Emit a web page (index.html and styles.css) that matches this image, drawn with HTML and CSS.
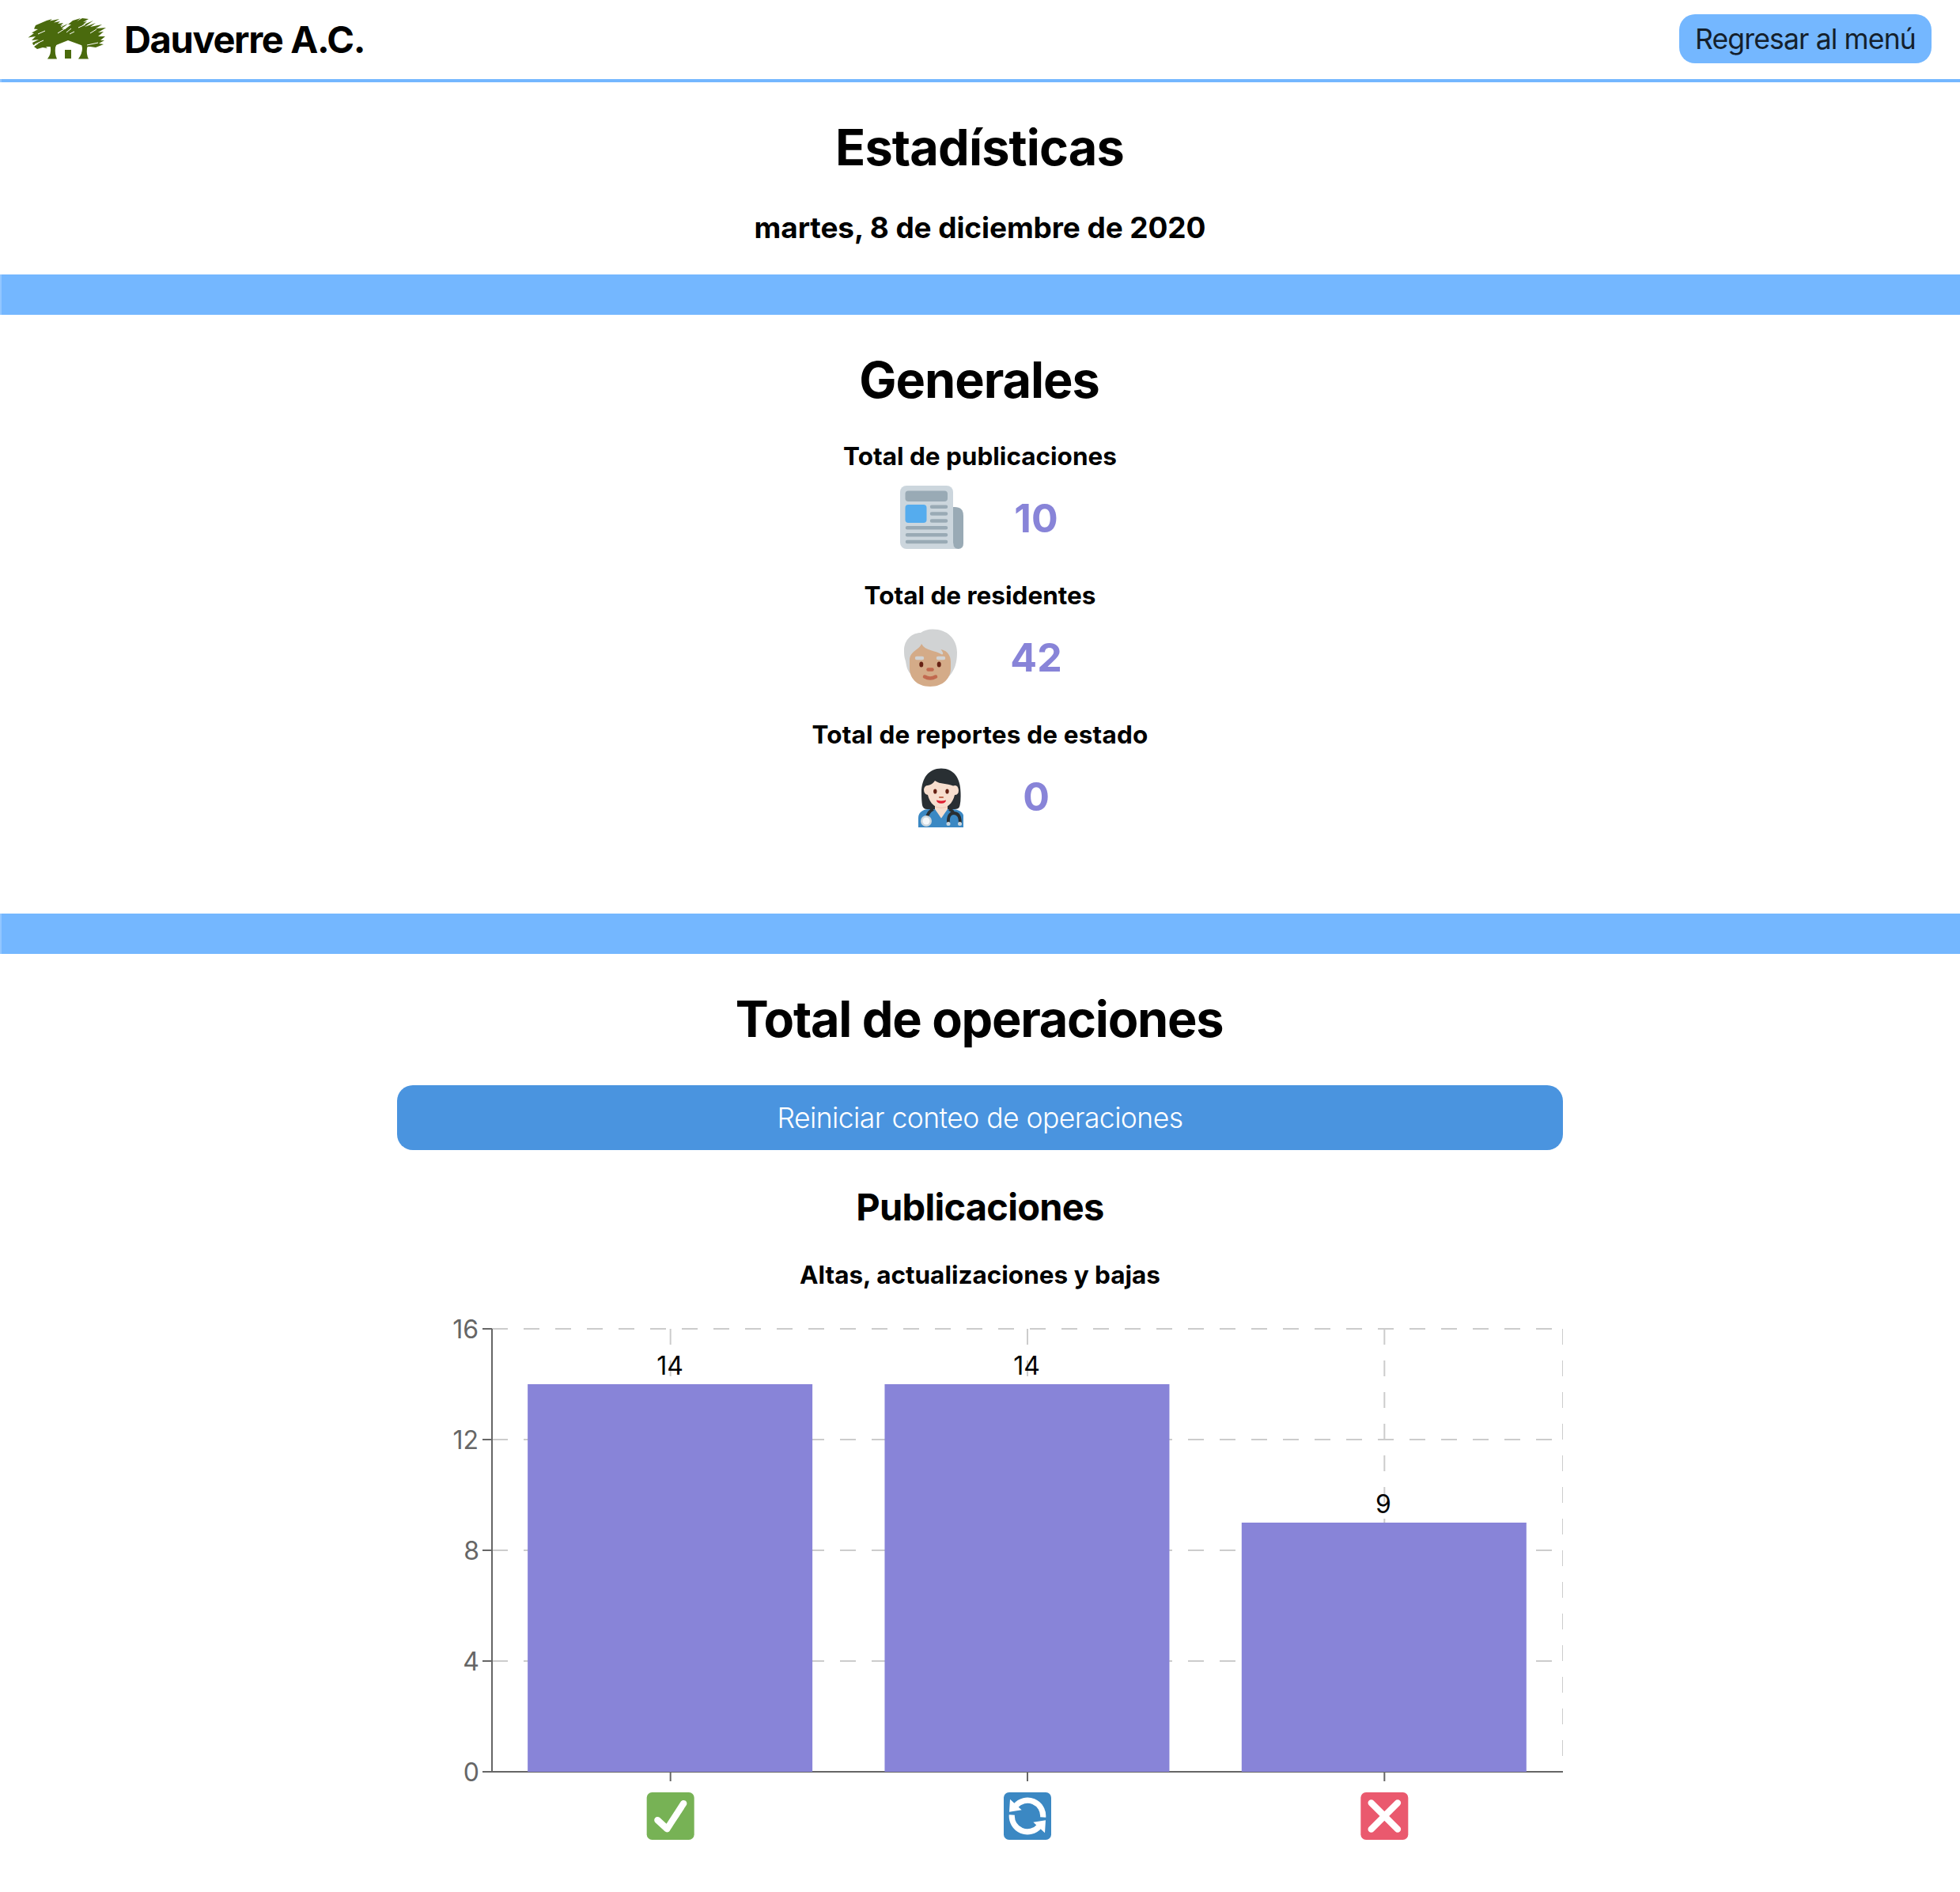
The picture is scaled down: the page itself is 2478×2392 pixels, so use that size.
FILE: index.html
```html
<!DOCTYPE html>
<html lang="es">
<head>
<meta charset="utf-8">
<title>Estadísticas - Dauverre A.C.</title>
<link rel="stylesheet" href="styles.css">
</head>
<body>
<header class="topbar">
  <svg class="logo" viewBox="32 20 106 58" width="106" height="58">
    <g fill="#4a6a0d">
      <path d="M35.500 47.500L43 42L40 41.500L48 37L43 36.500L45 32L52 29L59 26L66 24L63 26.500L75 24L68 28.500L76 27L73 30L80 29L76 33L86 30L78 36L82 37L90 31L86 31L92 26L102 23L97 27L104 23L112 24L105 28L110 27L104 32L118 26L107 34L121 29L114 34L129 31L121 36L134 35L124 41L131 40L124 46L133 46L127 51L132 51L125 55L131 56L121 60L114 59L108 59L86 51L66 59L58 59L60 61L54 60L47 62L43 59L50 54L42 57L41 54L49 50L40 51L45 46Z"/>
      <path d="M63 55L72 55L70 60Q69 68 72 74.500H60Q65 68 64 61ZM103 55L112 55L110 61Q109 69 112 74.500H99Q104 68 104 61Z"/>
      <path d="M82 63H90V74H82Z"/>
    </g>
    <path d="M77 34L88 28M73 42L84 35M84 41L90 36M88 43L94 40M99 35L108 31M114 42L122 37M48 43L57 39M44 56L55 51M110 57L124 54" stroke="#fff" stroke-width="1"/>
  </svg>
  <span class="brand">Dauverre A.C.</span>
  <button class="btn-back"><span>Regresar al menú</span></button>
</header>

<section class="intro">
  <h1 class="t-est">Estadísticas</h1>
  <h3 class="t-date">martes, 8 de diciembre de 2020</h3>
</section>
<div class="divider"></div>

<section class="general">
  <h1 class="t-gen">Generales</h1>
  <div class="stat">
    <h4 class="t-pub">Total de publicaciones</h4>
    <div class="stat-row">
      <svg viewBox="0 0 80 80" width="80" height="80">
        <rect width="67" height="80" rx="8" fill="#ccd6dd"/><path d="M50 70H67V72Q67 80 74 80H50Z" fill="#ccd6dd"/>
        <path d="M67 27V72Q67 80 73.500 80Q80 80 80 73V38Q80 27 69 27Z" fill="#99aab5"/>
        <rect x="6.500" y="6.500" width="53.500" height="13.500" rx="4" fill="#99aab5"/>
        <rect x="6.500" y="24" width="27" height="23" rx="4" fill="#55acee"/>
        <path d="M40 26.700H58M40 35.500H58M40 44.500H58M9 53.300H58M9 62.200H58M9 71.100H58" stroke="#99aab5" stroke-width="4.500" stroke-linecap="round"/>
      </svg>
      <strong>10</strong>
    </div>
  </div>
  <div class="stat">
    <h4 class="t-res">Total de residentes</h4>
    <div class="stat-row">
      <svg viewBox="18 10 80 80" width="80" height="80">
        <path d="M44 20Q50 15.500 59 15.500C78 15.500 90 28 90 45C90 58 87 67 80 75L32 73C27 68 26 62 25 56C23 51 23 46 23 42C23 29 33 20 44 20Z" fill="#d1d3d4"/>
        <path d="M30 55C30 43 42 42 45 34C50 43 62 42 71 47.500Q74 47 69.500 41C79 43 82 50 82 57V65C82 77 73 88 56 88C39 88 30 77 30 65Z" fill="#d4ab88"/>
        <path d="M39 52H46M66 52H73" stroke="#d1d3d4" stroke-width="4.500" stroke-linecap="round"/>
        <ellipse cx="44.800" cy="60" rx="2.500" ry="3.500" fill="#662113"/><ellipse cx="67.200" cy="60" rx="2.500" ry="3.500" fill="#662113"/>
        <path d="M53.500 66.500H58.500" stroke="#c1694f" stroke-width="4.500" stroke-linecap="round"/>
        <path d="M49 75.500Q56 79.500 63 75.500" fill="none" stroke="#c1694f" stroke-width="4.500" stroke-linecap="round"/>
      </svg>
      <strong>42</strong>
    </div>
  </div>
  <div class="stat">
    <h4 class="t-rep">Total de reportes de estado</h4>
    <div class="stat-row">
      <svg viewBox="18 16 80 80" width="80" height="80">
        <path d="M45 52C45 34 54 21.500 70 21.500C86 21.500 94.500 34 94.500 52Q95 64 93 70Q92 73 87 73H52Q47 73 46 68Q45 62 45 52Z" fill="#292f33"/>
        <path d="M41 96V84C41 77 47 73 54 73H84C93 73 99 78 99 85V96Z" fill="#3b88c3"/>
        <path d="M62 64H78V73L70 84.500L62 73Z" fill="#f7dece"/>
        <path d="M53 43Q59 42 62 37C69 42 77 40 85 43.500Q91 41 92 49Q92 55 87 55C85 64 79 71.500 70 71.500C61 71.500 55 64 53 55Q48 54 48 48Q49 43 53 43Z" fill="#f7dece"/>
        <path d="M62 70Q70 73 78 70" fill="none" stroke="#eec2ad" stroke-width=".8"/>
        <ellipse cx="62.300" cy="50.500" rx="2.200" ry="3.100" fill="#662113"/><ellipse cx="77.500" cy="50.500" rx="2.200" ry="3.100" fill="#662113"/>
        <path d="M68 58H72" stroke="#c1694f" stroke-width="2.200" stroke-linecap="round"/>
        <path d="M64 61.500Q70 63.500 76 61.500Q76 65.500 70 65.800Q64 65.500 64 61.500Z" fill="#df1f32"/>
        <path d="M60 73Q53 76 52 84M80 73Q85 75 86 79M79 91Q78 78 86 78Q94 78 94 91" fill="none" stroke="#292f33" stroke-width="3.800"/>
        <circle cx="51" cy="88" r="7" fill="#ccd6dd"/><circle cx="51" cy="88" r="4.500" fill="#f5f8fa"/>
        <circle cx="79" cy="91.500" r="2.500" fill="#ccd6dd"/><circle cx="93.500" cy="91.500" r="2.500" fill="#ccd6dd"/>
      </svg>
      <strong>0</strong>
    </div>
  </div>
</section>
<div class="divider"></div>

<section class="operations">
  <h1 class="t-ops">Total de operaciones</h1>
  <button class="btn-reset"><span>Reiniciar conteo de operaciones</span></button>
  <h2 class="t-publ">Publicaciones</h2>
  <h4 class="t-alt">Altas, actualizaciones y bajas</h4>
  <svg class="chart" viewBox="502 1660 1474 700" width="1474" height="700">
    <g stroke="#ccc" stroke-width="2" stroke-dasharray="20 20">
      <path d="M622 1680H1976"/><path d="M622 1820H1976"/><path d="M622 1960H1976"/><path d="M622 2100H1976"/>
      <path d="M847.670 1680V2240"/><path d="M1299 1680V2240"/><path d="M1750.330 1680V2240"/><path d="M1976 1680V2240"/>
    </g>
    <path d="M622 1680V2240M622 2240H1976M610 1680H622M610 1820H622M610 1960H622M610 2100H622M610 2240H622M847.670 2240V2252M1299 2240V2252M1750.330 2240V2252" stroke="#666" stroke-width="2"/>
    <g fill="#8884d8">
      <rect x="667.130" y="1750" width="360" height="490"/>
      <rect x="1118.470" y="1750" width="360" height="490"/>
      <rect x="1569.800" y="1925" width="360" height="315"/>
    </g>
    <g class="ylabels">
      <text x="605" y="1692">16</text><text x="605" y="1832">12</text><text x="606" y="1972">8</text><text x="606" y="2112">4</text><text x="606" y="2252">0</text>
    </g>
    <g class="values">
      <text x="847" y="1738">14</text><text x="1298" y="1738">14</text><text x="1749" y="1913">9</text>
    </g>
    <g transform="translate(817.670 2266) scale(1.66667)">
      <rect width="36" height="36" rx="4" fill="#77b255"/>
      <path fill="#fff" d="M29.280 6.362c-1.156-.751-2.704-.422-3.458.736L14.936 23.877l-5.029-4.650c-1.014-.938-2.596-.875-3.533.138-.937 1.014-.875 2.596.139 3.533l7.209 6.666c.480.445 1.090.665 1.696.665.673 0 1.534-.282 2.099-1.139.332-.506 12.500-19.270 12.500-19.270.751-1.159.421-2.707-.737-3.458z"/>
    </g>
    <g transform="translate(1269 2266) scale(1.66667)">
      <rect width="36" height="36" rx="4" fill="#3b88c3"/>
      <path fill="none" stroke="#fff" stroke-width="4.300" d="M9 10.300A11.800 11.800 0 0 1 29.800 18.900M27 25.700A11.800 11.800 0 0 1 6.200 17.100"/>
      <path fill="#fff" d="M4.800 5.300L4.200 14.800L13.600 13.400ZM31.200 30.700L31.800 21.200L22.400 22.600Z"/>
    </g>
    <g transform="translate(1720.330 2266) scale(1.66667)">
      <rect width="36" height="36" rx="4" fill="#ea596e"/>
      <path d="M8 8L28 28M28 8L8 28" stroke="#fff" stroke-width="5" stroke-linecap="round"/>
    </g>
  </svg>
</section>
</body>
</html>
```
FILE: styles.css
```css
* { box-sizing: border-box; }
body {
  margin: 0;
  background: #fff;
  color: #000;
  font-family: Inter, "Liberation Sans", sans-serif;
  font-size: 32px;
}
h1, h2, h3, h4 { margin: 0; font-weight: 650; text-align: center; white-space: nowrap; }
h1 { font-size: 63px; line-height: 76px; }
h2 { font-size: 47px; line-height: 58px; letter-spacing: -0.75px; }
h3 { font-size: 37px; line-height: 46px; letter-spacing: -0.1px; }
h4 { font-size: 31.500px; line-height: 38px; }

.topbar {
  display: flex;
  align-items: center;
  height: 104px;
  padding: 0 36px 6px 32px;
  background: linear-gradient(90deg, #92c6ff 2px, #74b7ff 2px) bottom / 100% 4px no-repeat;
}
.logo { margin-right: 19px; }
.brand { font-size: 47px; font-weight: 650; line-height: 56px; letter-spacing: -1.35px; padding-top: 2px; }
button { border: 0; border-radius: 20px; font-family: inherit; padding: 0; white-space: nowrap; }
.btn-back {
  width: 319px;
  height: 62px;
  margin-left: auto;
  background: #74b7ff;
  color: #14202c;
  font-size: 35.500px;
  font-weight: 400;
  letter-spacing: -0.85px;
}
.btn-reset {
  width: 1474px;
  height: 82px;
  background: #4a94df;
  color: #fff;
  font-size: 35.500px;
  font-weight: 320;
  letter-spacing: -0.56px;
}
.divider { height: 51px; background: #74b7ff; border-left: 2px solid #92c6ff; }

.intro { height: 243px; padding-top: 44px; }
.t-est { letter-spacing: -0.85px; padding-right: 1px; }
.t-date { margin-top: 41px; }

.general { height: 757px; padding-top: 44px; }
.t-gen { letter-spacing: -1.05px; padding-right: 2px; }
.stat { height: 176px; }
.t-pub { margin-top: 40px; }
.t-rep { letter-spacing: 0.18px; }
.stat-row {
  display: grid;
  grid-template-columns: 80px 104px;
  gap: 40px;
  align-items: start;
  justify-content: center;
  margin-top: 18px;
  padding-left: 22px;
}
.stat-row strong { font-size: 50px; font-weight: 650; line-height: 82px; color: #8884d8; text-align: center; }

.operations { display: flex; flex-direction: column; align-items: center; padding-top: 44px; }
.t-ops { letter-spacing: -1.27px; padding-right: 2px; }
.btn-reset { margin-top: 46px; }
.t-publ { margin-top: 43px; }
.t-alt { margin-top: 38px; }
.chart { display: block; margin-top: 29px; }
.chart text { font-size: 32px; }
.ylabels { fill: #666; text-anchor: end; }
.values { fill: #000; text-anchor: middle; }
```
